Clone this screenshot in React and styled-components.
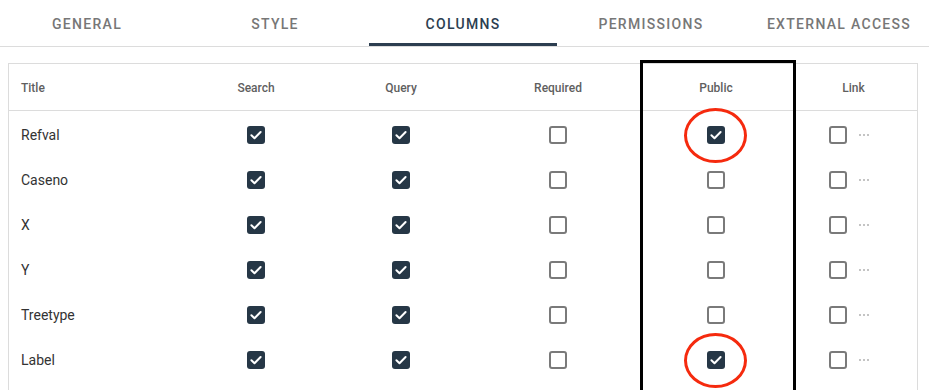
import React from 'react'
import styled, { createGlobalStyle } from 'styled-components'

const GlobalStyle = createGlobalStyle`
  html, body {
    margin: 0;
    padding: 0;
    background: #fff;
    font-family: Roboto, "Liberation Sans", sans-serif;
    overflow: hidden;
  }
`

const tabs = ['General', 'Style', 'Columns', 'Permissions', 'External access']

const rows = [
  { title: 'Refval', search: true, query: true, required: false, public: true, marked: true },
  { title: 'Caseno', search: true, query: true, required: false, public: false },
  { title: 'X', search: true, query: true, required: false, public: false },
  { title: 'Y', search: true, query: true, required: false, public: false },
  { title: 'Treetype', search: true, query: true, required: false, public: false },
  { title: 'Label', search: true, query: true, required: false, public: true, marked: true },
]

function Box({ checked }) {
  return (
    <Check $checked={checked}>
      {checked && (
        <svg width="14" height="14" viewBox="0 0 14 14" fill="none">
          <path d="M2.4 7.2l3.1 3L11.6 4" stroke="#fff" strokeWidth="2" strokeLinecap="round" strokeLinejoin="round" />
        </svg>
      )}
    </Check>
  )
}

function App() {
  return (
    <Page>
      <GlobalStyle />
      <TabBar>
        {tabs.map((t) => (
          <Tab key={t} $active={t === 'Columns'}>{t}</Tab>
        ))}
      </TabBar>
      <Wrap>
        <Table>
          <HeadRow>
            <HeadCell $left>Title</HeadCell>
            <HeadCell>Search</HeadCell>
            <HeadCell>Query</HeadCell>
            <HeadCell>Required</HeadCell>
            <HeadCell>Public</HeadCell>
            <HeadCell>Link</HeadCell>
          </HeadRow>
          <Body>
            {rows.map((r) => (
              <Row key={r.title}>
                <Cell $left>{r.title}</Cell>
                <Cell><Box checked={r.search} /></Cell>
                <Cell><Box checked={r.query} /></Cell>
                <Cell><Box checked={r.required} /></Cell>
                <Cell>
                  <Box checked={r.public} />
                  {r.marked && <Ring />}
                </Cell>
                <Cell $link>
                  <Box checked={false} />
                  <Dots>
                    <Dot /><Dot /><Dot />
                  </Dots>
                </Cell>
              </Row>
            ))}
          </Body>
        </Table>
        <Highlight />
      </Wrap>
    </Page>
  )
}

export default App

const Page = styled.div`
  width: 929px;
  height: 390px;
  overflow: hidden;
`

const TabBar = styled.div`
  display: flex;
  margin-left: -7px;
  width: 940px;
  height: 46px;
  border-bottom: 1px solid #dcdcdc;
`

const Tab = styled.div`
  width: 188px;
  flex: none;
  display: flex;
  align-items: center;
  justify-content: center;
  font-size: 14px;
  font-weight: 500;
  letter-spacing: 1.3px;
  text-transform: uppercase;
  color: ${(p) => (p.$active ? '#2c3e50' : '#777')};
  box-shadow: ${(p) => (p.$active ? 'inset 0 -3px 0 #2c3e50' : 'none')};
  padding-top: 2px;
  box-sizing: border-box;
`

const Wrap = styled.div`
  position: relative;
  padding: 16px 11px 0 8px;
`

const Table = styled.div`
  border: 1px solid #dcdcdc;
  border-bottom: none;
  height: 400px;
`

const grid = `
  display: grid;
  grid-template-columns: 175px 144px 146px 168px 148px 1fr;
  align-items: center;
`

const HeadRow = styled.div`
  ${grid}
  height: 46px;
  border-bottom: 1px solid #dcdcdc;
`

const HeadCell = styled.div`
  font-size: 12px;
  font-weight: 500;
  color: #5f5f5f;
  text-align: ${(p) => (p.$left ? 'left' : 'center')};
  padding-left: ${(p) => (p.$left ? '12px' : '0')};
  padding-top: 2px;
`

const Body = styled.div`
  padding-top: 1px;
`

const Row = styled.div`
  ${grid}
  height: 45px;
`

const Cell = styled.div`
  position: relative;
  display: flex;
  align-items: center;
  justify-content: ${(p) => (p.$left || p.$link ? 'flex-start' : 'center')};
  padding-left: ${(p) => (p.$left ? '12px' : p.$link ? '39px' : '0')};
  gap: 12px;
  font-size: 14px;
  color: #333;
  height: 100%;
`

const Check = styled.span`
  width: 18px;
  height: 18px;
  box-sizing: border-box;
  border-radius: 3px;
  display: inline-flex;
  align-items: center;
  justify-content: center;
  background: ${(p) => (p.$checked ? '#263746' : '#fff')};
  border: ${(p) => (p.$checked ? 'none' : '2px solid #7a7a7a')};
`

const Dots = styled.span`
  display: inline-flex;
  gap: 2px;
  align-items: center;
`

const Dot = styled.i`
  width: 2px;
  height: 2px;
  border-radius: 50%;
  background: #b0b0b0;
`

const Ring = styled.span`
  position: absolute;
  left: 50%;
  top: 50%;
  width: 63px;
  height: 55px;
  margin-left: -32.5px;
  margin-top: -27px;
  box-sizing: border-box;
  border: 3px solid #f52a0e;
  border-radius: 50%;
`

const Highlight = styled.div`
  position: absolute;
  left: 640px;
  top: 13px;
  width: 156px;
  height: 376px;
  box-sizing: border-box;
  border: 3.5px solid #000;
  pointer-events: none;
`
